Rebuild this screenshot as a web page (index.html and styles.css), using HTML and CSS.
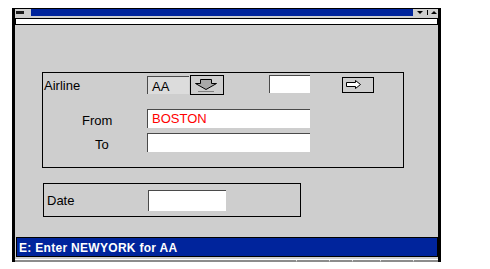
FILE: index.html
```html
<!DOCTYPE html>
<html lang="en">
<head>
    <meta charset="UTF-8">
    <meta name="viewport" content="width=device-width, initial-scale=1.0">
    <title>Flight Entry</title>
    <link rel="stylesheet" href="styles.css">
</head>
<body>
    <div class="window">
        <div class="titlebar">
            <div class="sysmenu"><span class="dash"></span></div>
            <div class="caption"></div>
            <div class="controls">
                <svg width="25" height="7" viewBox="0 0 25 7">
                    <polygon points="4,2 10,2 7,5" fill="#000"/>
                    <rect x="14" y="1" width="1" height="5" fill="#000"/>
                    <polygon points="18,5 24,5 21,2" fill="#000"/>
                </svg>
            </div>
        </div>
        <div class="menubar"></div>

        <div class="content">
            <div class="group flight">
                <div class="row airline">
                    <span class="label">Airline</span>
                    <span class="field code">AA</span>
                    <button class="btn drop" title="List">
                        <svg width="32" height="18" viewBox="0 0 32 18">
                            <polygon points="9.5,3.5 20.5,3.5 20.5,7.5 25.5,7.5 15,13.5 4.5,7.5 9.5,7.5" fill="#a8a8a8" stroke="#000" stroke-width="1"/>
                            <rect x="7" y="15" width="16" height="1" fill="#808080"/>
                        </svg>
                    </button>
                    <span class="field small"></span>
                    <button class="btn next" title="Next">
                        <svg width="16" height="10" viewBox="0 0 16 10">
                            <polygon points="0.5,2.5 9.5,2.5 9.5,0.5 14.5,4.5 9.5,8.5 9.5,6.5 0.5,6.5" fill="#fff" stroke="#000" stroke-width="1"/>
                        </svg>
                    </button>
                </div>
                <div class="row city from">
                    <span class="label">From</span>
                    <span class="field wide red">BOSTON</span>
                </div>
                <div class="row city to">
                    <span class="label">To</span>
                    <span class="field wide"></span>
                </div>
            </div>

            <div class="group dates">
                <div class="row">
                    <span class="label">Date</span>
                    <span class="field date"></span>
                </div>
            </div>
        </div>

        <div class="statusbar">E: Enter NEWYORK for AA</div>
        <div class="panes">
            <span class="pane first"></span>
            <span class="pane" style="width: 33px"></span>
            <span class="pane" style="width: 23px"></span>
            <span class="pane" style="width: 28px"></span>
            <span class="pane" style="width: 33px"></span>
            <span class="pane last"></span>
        </div>
    </div>
</body>
</html>
```

FILE: styles.css
```css
:root {
    --face: #cecece;
    --blue: #00249c;
    --shadow: #4a4a4a;
    --ink: #000;
}

* {
    margin: 0;
    padding: 0;
    box-sizing: border-box;
}

body {
    background: #fff;
    font-family: 'Liberation Sans', Arial, sans-serif;
    font-size: 13px;
    color: var(--ink);
}

.window {
    width: 429px;
    height: 254px;
    margin: 8px 0 0 12px;
    background: var(--face);
    border-top: 1px solid #000;
    border-left: 3px solid #000;
    border-right: 3px solid #000;
    display: flex;
    flex-direction: column;
}

/* Title bar */
.titlebar {
    display: flex;
    height: 7px;
}

.sysmenu {
    width: 16px;
    padding: 2px 0 0 1px;
}

.dash {
    display: block;
    width: 8px;
    height: 3px;
    background: #1c1c1c;
}

.caption {
    flex: 1;
    background: var(--blue);
}

.controls {
    width: 25px;
    display: flex;
    align-items: center;
}

.menubar {
    height: 7px;
    margin-top: 2px;
    background: #fff;
    border: 1px solid #000;
}

/* Form area */
.content {
    flex: 1;
    padding: 47px 0 0 27px;
}

.group {
    border: 1px solid #000;
}

.flight {
    width: 362px;
    height: 96px;
    padding-top: 2px;
}

.dates {
    width: 258px;
    height: 34px;
    margin: 15px 0 0 1px;
    padding-top: 6px;
}

.row {
    display: flex;
    align-items: center;
}

.label {
    width: 104px;
    line-height: 15px;
    padding-left: 1px;
}

.airline {
    height: 20px;
}

.city {
    align-items: flex-end;
}

.from {
    margin-top: 14px;
}

.to {
    margin-top: 5px;
}

.from .label {
    padding-left: 39px;
}

.to .label {
    padding-left: 52px;
}

.dates .label {
    padding-left: 3px;
}

.field {
    display: block;
    background: #fff;
    border-top: 1px solid var(--shadow);
    border-left: 1px solid var(--shadow);
    padding-left: 4px;
    line-height: 17px;
}

.code {
    width: 42px;
    height: 18px;
    background: #dcdcdc;
    padding-top: 1px;
}

.small {
    width: 41px;
    height: 18px;
    margin-left: 45px;
    margin-top: -2px;
}

.wide {
    width: 163px;
    height: 19px;
}

.red {
    color: #f00;
}

.date {
    width: 78px;
    height: 21px;
}

.btn {
    display: flex;
    align-items: center;
    justify-content: center;
    background: var(--face);
    border: 1px solid #000;
}

.drop {
    width: 34px;
    height: 20px;
    margin-left: 1px;
}

.next {
    width: 32px;
    height: 16px;
    margin-left: 32px;
    justify-content: flex-start;
    padding-left: 3px;
    margin-top: -1px;
}

/* Status line */
.statusbar {
    height: 20px;
    margin-left: 1px;
    padding: 2px 0 0 2px;
    background: var(--blue);
    border: 1px solid #000;
    color: #fff;
    font-weight: bold;
    font-size: 12px;
    line-height: 16px;
    letter-spacing: 0.3px;
}

.panes {
    display: flex;
    height: 5px;
    padding-top: 2px;
}

.pane {
    display: block;
    height: 3px;
    border-top: 1px solid #fff;
    border-bottom: 2px solid #8c8c8c;
    border-left: 1px solid #fff;
}

.pane.first {
    width: 281px;
    border-left: none;
}

.pane.last {
    flex: 1;
}
```
